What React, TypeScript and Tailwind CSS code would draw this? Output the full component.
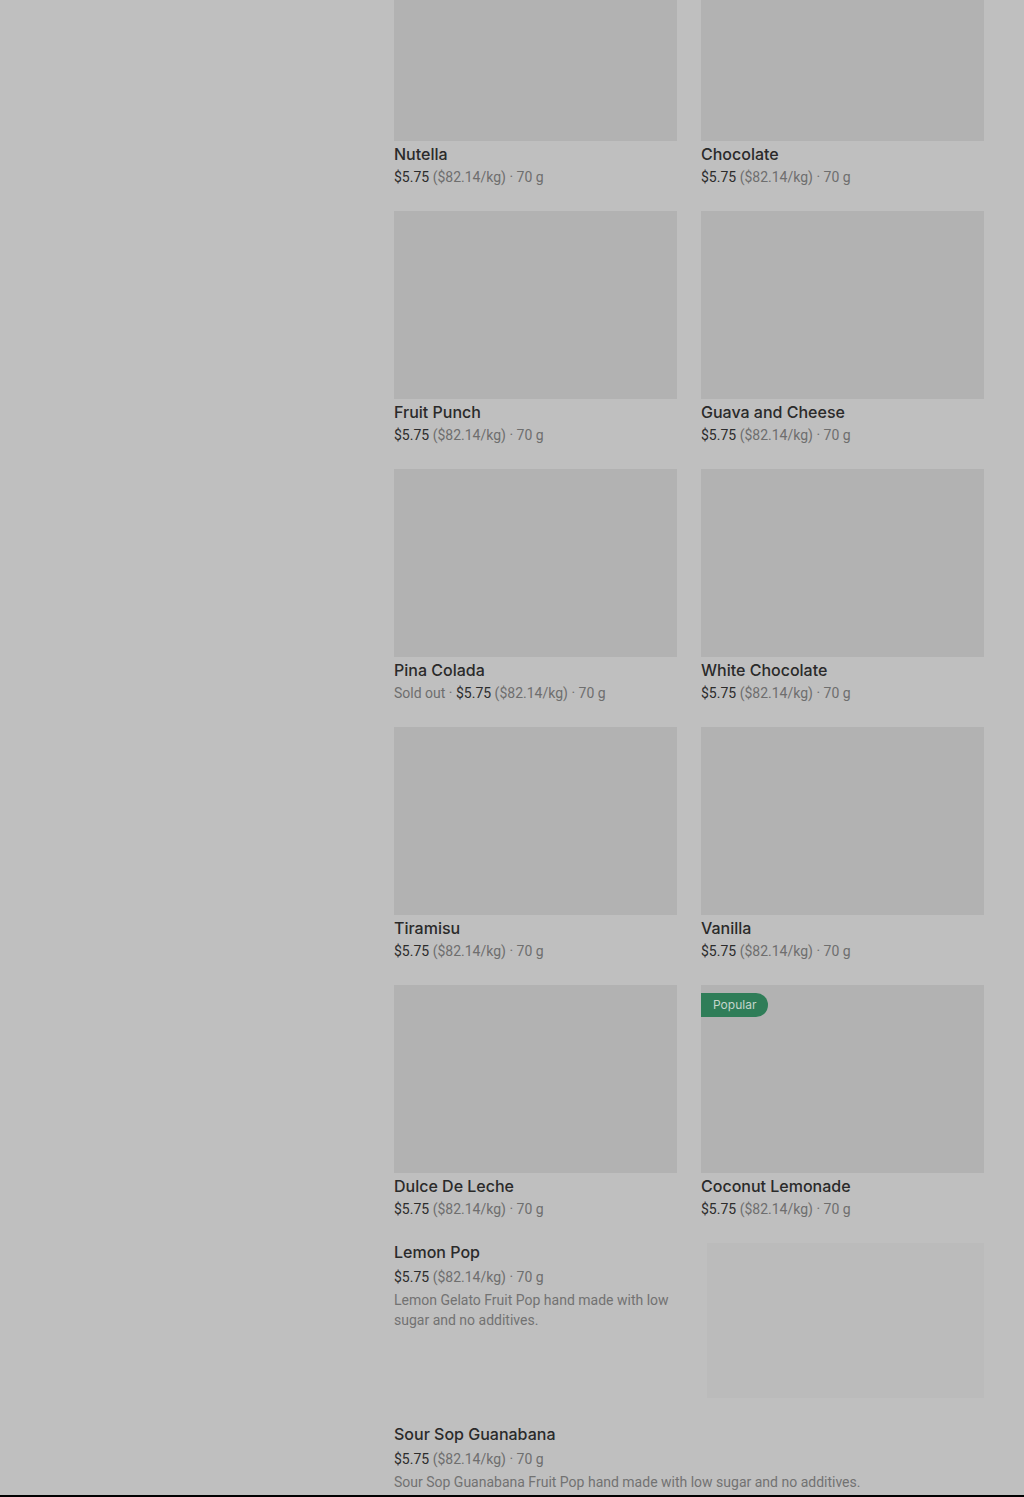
import React from 'react';

type Item = { name: string; soldOut?: boolean; popular?: boolean };

const grid: Item[] = [
  { name: 'Nutella' },
  { name: 'Chocolate' },
  { name: 'Fruit Punch' },
  { name: 'Guava and Cheese' },
  { name: 'Pina Colada', soldOut: true },
  { name: 'White Chocolate' },
  { name: 'Tiramisu' },
  { name: 'Vanilla' },
  { name: 'Dulce De Leche' },
  { name: 'Coconut Lemonade', popular: true },
];

const body = { fontFamily: 'Roboto, "Liberation Sans", sans-serif' };

function Price({ soldOut }: { soldOut?: boolean }) {
  return (
    <div className="text-sm leading-[22px] text-[#6e6e6e]" style={body}>
      {soldOut && <span>Sold out · </span>}
      <span className="text-[#2c2c2c]">$5.75</span> ($82.14/kg) · 70 g
    </div>
  );
}

function Card({ item }: { item: Item }) {
  return (
    <div className="flex flex-col">
      <div className="relative h-[188px] bg-[#b2b2b2]">
        {item.popular && (
          <div className="absolute left-0 top-2 h-6 px-3 rounded-r-full bg-[#2f7d58] text-xs leading-6 text-[#c4d6cc]">
            Popular
          </div>
        )}
      </div>
      <div className="mt-[1px] text-base leading-6 font-medium text-[#2a2a2a]">{item.name}</div>
      <Price soldOut={item.soldOut} />
    </div>
  );
}

export default function App() {
  return (
    <div
      className="relative w-[1024px] h-[1497px] overflow-hidden bg-[#bfbfbf]"
      style={{ fontFamily: 'Inter, "Noto Sans", "Liberation Sans", sans-serif' }}
    >
      <div className="flex">
        <div className="w-[394px] shrink-0" />
        <div className="w-[590px] -mt-[47px]">
          <div className="grid grid-cols-2 gap-x-6 gap-y-[23px]">
            {grid.map(item => (
              <Card key={item.name} item={item} />
            ))}
          </div>

          {/* list rows */}
          <div className="mt-[20px] flex gap-[30px] h-[158px]">
            <div className="flex-1">
              <div className="text-base leading-6 font-medium text-[#2a2a2a]">Lemon Pop</div>
              <div className="mt-[2px]"><Price /></div>
              <div className="mt-[2px] text-sm leading-5 text-[#727272]" style={body}>
                Lemon Gelato Fruit Pop hand made with low sugar and no additives.
              </div>
            </div>
            <div className="mt-[3px] w-[277px] h-[155px] bg-[#bbbbbb]" />
          </div>

          <div className="mt-[24px]">
            <div className="text-base leading-6 font-medium text-[#2a2a2a]">Sour Sop Guanabana</div>
            <div className="mt-[2px]"><Price /></div>
            <div className="mt-[2px] text-sm leading-5 text-[#727272]" style={body}>
              Sour Sop Guanabana Fruit Pop hand made with low sugar and no additives.
            </div>
          </div>
        </div>
      </div>
      <div className="absolute left-0 right-0 bottom-0 h-[2px] bg-black" />
    </div>
  );
}
